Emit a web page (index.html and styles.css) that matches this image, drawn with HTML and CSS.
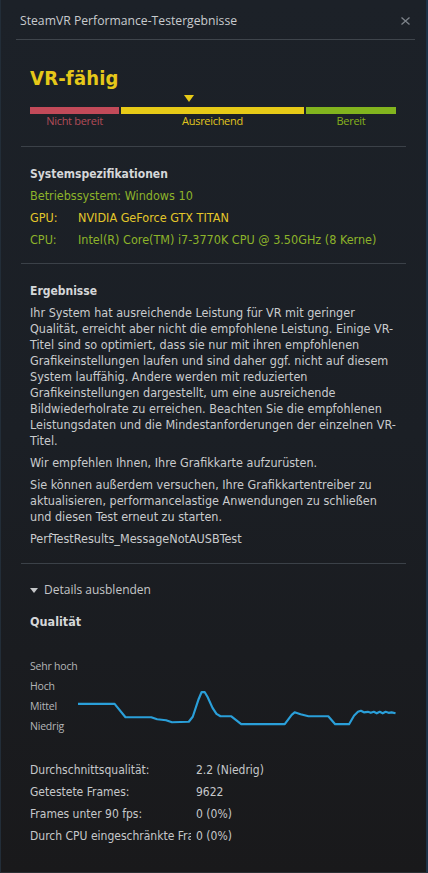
FILE: index.html
```html
<!DOCTYPE html>
<html lang="de">
<head>
    <meta charset="UTF-8">
    <meta name="viewport" content="width=device-width, initial-scale=1.0">
    <title>SteamVR Performance-Testergebnisse</title>
    <link rel="stylesheet" href="styles.css">
</head>
<body>
    <div class="window">
        <header class="titlebar">
            <span class="title">SteamVR Performance-Testergebnisse</span>
            <svg class="close" width="9" height="8" viewBox="0 0 9 8">
                <path d="M0.5 0.5 L8.5 7.5 M8.5 0.5 L0.5 7.5" stroke="#7d838a" stroke-width="1.3" fill="none"/>
            </svg>
        </header>

        <section class="section rating">
            <h1>VR-fähig</h1>
            <div class="meter">
                <div class="segment bad">
                    <span class="bar"></span>
                    <span class="label">Nicht bereit</span>
                </div>
                <div class="segment ok">
                    <span class="marker"></span>
                    <span class="bar"></span>
                    <span class="label">Ausreichend</span>
                </div>
                <div class="segment good">
                    <span class="bar"></span>
                    <span class="label">Bereit</span>
                </div>
            </div>
        </section>

        <section class="section specs">
            <h2>Systemspezifikationen</h2>
            <div class="spec green">Betriebssystem: Windows 10</div>
            <div class="spec yellow"><span class="spec-key">GPU:</span>NVIDIA GeForce GTX TITAN</div>
            <div class="spec green"><span class="spec-key">CPU:</span>Intel(R) Core(TM) i7-3770K CPU @ 3.50GHz (8 Kerne)</div>
        </section>

        <section class="section results">
            <h2>Ergebnisse</h2>
            <p>Ihr System hat ausreichende Leistung für VR mit geringer Qualität, erreicht aber nicht die empfohlene Leistung. Einige VR-Titel sind so optimiert, dass sie nur mit ihren empfohlenen Grafikeinstellungen laufen und sind daher ggf. nicht auf diesem System lauffähig. Andere werden mit reduzierten Grafikeinstellungen dargestellt, um eine ausreichende Bildwiederholrate zu erreichen. Beachten Sie die empfohlenen Leistungsdaten und die Mindestanforderungen der einzelnen VR-Titel.</p>
            <p>Wir empfehlen Ihnen, Ihre Grafikkarte aufzurüsten.</p>
            <p>Sie können außerdem versuchen, Ihre Grafikkartentreiber zu aktualisieren, performancelastige Anwendungen zu schließen und diesen Test erneut zu starten.</p>
            <p>PerfTestResults_MessageNotAUSBTest</p>
        </section>

        <section class="details">
            <div class="toggle"><span class="toggle-arrow"></span>Details ausblenden</div>
            <h2 class="quality-title">Qualität</h2>

            <div class="chart">
                <div class="chart-labels">
                    <span>Sehr hoch</span>
                    <span>Hoch</span>
                    <span>Mittel</span>
                    <span>Niedrig</span>
                </div>
                <svg class="chart-line" width="322" height="80" viewBox="0 0 322 80">
                    <polyline fill="none" stroke="#2a9fd9" stroke-width="2.2" stroke-linejoin="round"
                        points="0,48 37,48 48,61.5 74,61.5 80,63.5 89,64.5 95,66.5 112,66 116,61 122,43 125,36 128,36 131,41 136,52 140,58 144,60.5 155,60.5 165,68.5 209,68.5 216,59 219,56.5 225,58.5 233,60.5 253,60.5 260,68.5 274,68.5 279,60 283,56 286,55 289,56.5 293,56 296,57 299,56 302,57.5 305,56 308,57.5 311,56 314,57 317,56.5 321,57.5"/>
                </svg>
            </div>

            <div class="stats">
                <span class="stat-key">Durchschnittsqualität:</span><span>2.2 (Niedrig)</span>
                <span class="stat-key">Getestete Frames:</span><span>9622</span>
                <span class="stat-key">Frames unter 90 fps:</span><span>0 (0%)</span>
                <span class="stat-key">Durch CPU eingeschränkte Frames:</span><span>0 (0%)</span>
            </div>
        </section>
    </div>
</body>
</html>
```

FILE: styles.css
```css
:root {
    --text: #c9cbcd;
    --divider: #3b4148;
    --green: #8db32a;
    --yellow: #e3c72a;
    --red: #b24c58;
    --body-font: 'DejaVu Sans Condensed', 'DejaVu Sans', sans-serif;
    --ui-font: 'Open Sans', 'Noto Sans', sans-serif;
}

html, body {
    margin: 0;
    height: 100%;
}

body {
    background: #15181c;
    color: var(--text);
    font: 12.5px/16px var(--body-font);
}

.window {
    box-sizing: border-box;
    height: 873px;
    background: linear-gradient(#1c2128 0%, #1b1f25 50%, #19191b 100%);
    border-left: 1px solid #222d38;
    border-right: 2px solid #1d3247;
    border-bottom: 1px solid #2a2e33;
    overflow: hidden;
}

/* Titelleiste */
.titlebar {
    display: flex;
    align-items: center;
    justify-content: space-between;
    height: 39px;
    margin: 0 11px 0 15px;
    padding: 0 0 0 4px;
    border-bottom: 1px solid #3f454c;
}

.title {
    font: 400 12.2px/16px var(--ui-font);
    color: #c8cbce;
    padding-top: 2px;
}

.close {
    display: block;
    margin: 2px 5px 0 0;
}

.section {
    margin: 0 20px;
    padding: 0 9px;
    border-bottom: 1px solid var(--divider);
}

/* Bewertung */
.rating {
    padding-top: 25px;
    padding-bottom: 19px;
}

h1 {
    font: 700 20px/26px var(--body-font);
    color: #e6c819;
    margin: 0 0 16px 0;
    letter-spacing: 0.2px;
}

.meter {
    display: grid;
    grid-template-columns: 89px 183px 90px;
    gap: 2px;
    width: 367px;
}

.segment {
    display: flex;
    flex-direction: column;
    align-items: center;
    position: relative;
}

.bar {
    display: block;
    width: 100%;
    height: 7px;
}

.bad .bar { background: #c24a59; }
.ok .bar { background: #e7ca17; }
.good .bar { background: #82b41e; }

.label {
    font: 400 11px/13px var(--ui-font);
    letter-spacing: -0.3px;
}

.bad .label { color: var(--red); }
.ok .label { color: #e0c51e; }
.good .label { color: #86b11c; }

.marker {
    position: absolute;
    left: 63px;
    top: -12px;
    width: 0;
    height: 0;
    border-left: 5.5px solid transparent;
    border-right: 5.5px solid transparent;
    border-top: 7px solid #e7ca17;
}

/* Systemspezifikationen */
h2 {
    font: 700 12px/22px var(--body-font);
    color: #d5d7d9;
    margin: 0;
}

.specs {
    padding-top: 16px;
    padding-bottom: 12px;
}

.spec {
    line-height: 22px;
    white-space: nowrap;
}

.spec.green { color: var(--green); }
.spec.yellow { color: var(--yellow); }

.spec-key {
    display: inline-block;
    width: 48px;
}

/* Ergebnisse */
.results {
    padding-top: 16px;
    padding-bottom: 16px;
}

.results h2 {
    margin-bottom: 3px;
}

.results p {
    margin: 0 0 6px 0;
}

.results p:last-child {
    margin-bottom: 0;
}

/* Details */
.details {
    padding: 17px 29px 0;
}

.toggle {
    display: flex;
    align-items: center;
    font: 400 12px/18px var(--ui-font);
    color: #c4c6c8;
}

.toggle-arrow {
    width: 0;
    height: 0;
    border-left: 4.5px solid transparent;
    border-right: 4.5px solid transparent;
    border-top: 5px solid #c4c6c8;
    margin-right: 6px;
}

.quality-title {
    font-size: 12.5px;
    margin-top: 12px;
}

.chart {
    display: flex;
    margin-top: 23px;
}

.chart-labels {
    display: flex;
    flex-direction: column;
    width: 49px;
    font: 400 10.5px/20px var(--ui-font);
    letter-spacing: -0.2px;
    white-space: nowrap;
    color: #b4b6b8;
}

.chart-line {
    display: block;
}

.stats {
    display: grid;
    grid-template-columns: 161px auto;
    column-gap: 5px;
    margin-top: 24px;
    font-size: 12px;
    line-height: 21.9px;
    color: #c6c8ca;
}

.stat-key {
    white-space: nowrap;
    overflow: hidden;
}
```
